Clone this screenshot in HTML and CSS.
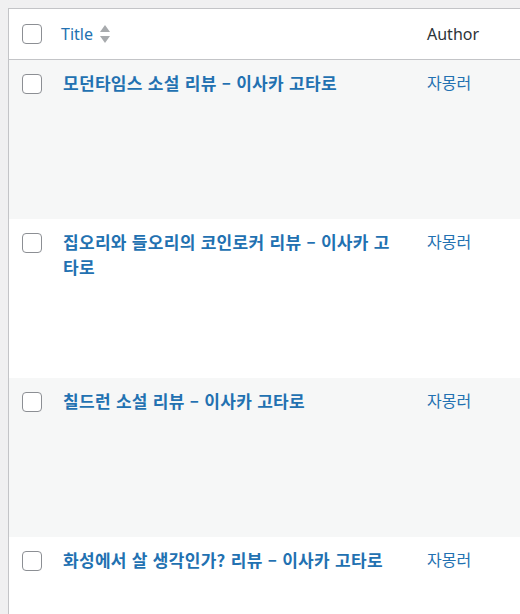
FILE: index.html
```html
<!DOCTYPE html>
<html lang="ko">
<head>
<meta charset="utf-8">
<title>Posts</title>
<link rel="stylesheet" href="styles.css">
</head>
<body>
<div class="table">
  <div class="row head">
    <div class="cell check"><span class="cb"></span></div>
    <div class="cell title-col">
      <a class="sort-link" href="#"><span>Title</span>
        <svg class="sort" width="10" height="19" viewBox="0 0 10 19"><path d="M5 0 L10 7 L0 7 Z" fill="#a7aaad"/><path d="M0 11 L10 11 L5 18 Z" fill="#a7aaad"/></svg>
      </a>
    </div>
    <div class="cell author-col head-text">Author</div>
  </div>
  <div class="row alt">
    <div class="cell check"><span class="cb"></span></div>
    <div class="cell title-col"><a class="row-title" href="#">모던타임스 소설 리뷰 – 이사카 고타로</a></div>
    <div class="cell author-col"><a class="author" href="#">자몽러</a></div>
  </div>
  <div class="row">
    <div class="cell check"><span class="cb"></span></div>
    <div class="cell title-col"><a class="row-title" href="#">집오리와 들오리의 코인로커 리뷰 – 이사카 고타로</a></div>
    <div class="cell author-col"><a class="author" href="#">자몽러</a></div>
  </div>
  <div class="row alt">
    <div class="cell check"><span class="cb"></span></div>
    <div class="cell title-col"><a class="row-title" href="#">칠드런 소설 리뷰 – 이사카 고타로</a></div>
    <div class="cell author-col"><a class="author" href="#">자몽러</a></div>
  </div>
  <div class="row">
    <div class="cell check"><span class="cb"></span></div>
    <div class="cell title-col"><a class="row-title" href="#">화성에서 살 생각인가? 리뷰 – 이사카 고타로</a></div>
    <div class="cell author-col"><a class="author" href="#">자몽러</a></div>
  </div>
</div>
</body>
</html>
```

FILE: styles.css
```css
html, body {
  margin: 0;
  padding: 0;
  background: #f0f0f1;
  overflow: hidden;
}
body {
  padding: 8px 0 0 8px;
  font-family: "Noto Sans", "Noto Sans CJK KR", sans-serif;
  font-size: 16px;
  color: #2c3338;
}
.table {
  width: 640px;
  border-left: 1px solid #c3c4c7;
  border-top: 1px solid #c3c4c7;
  background: #fff;
}
.row {
  display: grid;
  grid-template-columns: 40px 366px 1fr;
  height: 159px;
  background: #fff;
}
.row.alt {
  background: #f6f7f7;
}
.row.head {
  height: 50px;
  border-bottom: 1px solid #c3c4c7;
  align-items: center;
}
.cell {
  box-sizing: border-box;
}
.check {
  padding: 14px 0 0 13px;
}
.head .check {
  padding-top: 0;
}
.cb {
  display: block;
  width: 20px;
  height: 20px;
  box-sizing: border-box;
  border: 1px solid #8c8f94;
  border-radius: 4px;
  background: #fff;
}
.title-col {
  padding: 10px 12px 0 14px;
}
.author-col {
  padding: 10px 12px 0 12px;
}
.head .title-col {
  padding: 0 12px;
}
.head .author-col {
  padding-top: 0;
}
.sort-link {
  display: flex;
  align-items: center;
  gap: 7px;
  color: #2271b1;
  text-decoration: none;
  font-size: 16px;
}
.head-text {
  font-size: 16px;
  color: #2c3338;
}
.row-title {
  font-family: "Noto Sans CJK KR", "Noto Sans", sans-serif;
  font-weight: 700;
  font-size: 17px;
  letter-spacing: 0.3px;
  line-height: 25px;
  color: #2271b1;
  text-decoration: none;
}
.author {
  font-family: "Noto Sans CJK KR", "Noto Sans", sans-serif;
  font-size: 16px;
  line-height: 25px;
  color: #2271b1;
  text-decoration: none;
}
```
